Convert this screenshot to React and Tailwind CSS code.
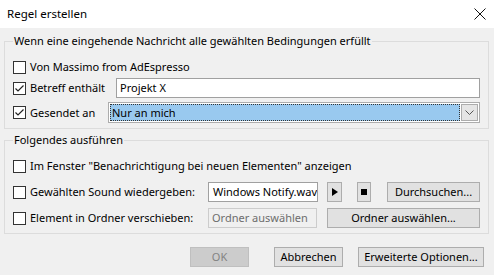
import React from "react";

function Checkbox({ checked }) {
  return (
    <div className="w-[13px] h-[13px] shrink-0 bg-white border border-[#333333] flex items-center justify-center">
      {checked && (
        <svg width="11" height="11" viewBox="0 0 11 11">
          <path d="M1.5 5.5 L4 8 L9.5 2.5" fill="none" stroke="#222" strokeWidth="1.2" />
        </svg>
      )}
    </div>
  );
}

function Btn({ children, className = "", disabled }) {
  return (
    <div
      className={
        "h-[20px] flex items-center justify-center border shrink-0 " +
        (disabled
          ? "bg-[#cccccc] border-[#bfbfbf] text-[#838383] "
          : "bg-[#e1e1e1] border-[#adadad] text-black ") +
        className
      }
    >
      {children}
    </div>
  );
}

export default function App() {
  return (
    <div className="w-[494px] h-[275px] flex flex-col bg-[#f0f0f0] font-['Noto_Sans',sans-serif] text-[11px] leading-[16px] text-black overflow-hidden">
      <div className="h-[28px] bg-white flex items-center justify-between pl-[7px] pr-[8px] shrink-0">
        <span className="text-[11.5px]">Regel erstellen</span>
        <svg width="12" height="12" viewBox="0 0 12 12">
          <path d="M0.5 0.5 L11.5 11.5 M11.5 0.5 L0.5 11.5" stroke="#111" strokeWidth="1" fill="none" />
        </svg>
      </div>
      <div className="flex-1 flex flex-col pl-[4px] pr-[5px] pt-[5px]">
        <fieldset className="border border-[#dcdcdc] pl-[8px] pr-[8px] pt-[8px] pb-[5px]">
          <legend className="px-[1px]">Wenn eine eingehende Nachricht alle gewählten Bedingungen erfüllt</legend>
          <div className="flex items-center h-[20px]">
            <Checkbox />
            <span className="ml-[4px]">Von Massimo from AdEspresso</span>
          </div>
          <div className="flex items-center h-[20px] mt-[1px]">
            <Checkbox checked />
            <span className="ml-[4px] w-[86px] shrink-0">Betreff enthält</span>
            <div className="flex-1 h-[20px] bg-white border border-[#a0a0a0] pl-[3px] flex items-center">Projekt X</div>
          </div>
          <div className="flex items-center h-[21px] mt-[4px]">
            <Checkbox checked />
            <span className="ml-[4px] w-[78px] shrink-0">Gesendet an</span>
            <div className="flex-1 h-[21px] bg-white border border-[#acacac] p-[1px] flex gap-[1px]">
              <div className="flex-1 bg-[#99c9ef] border border-dotted border-[#333] flex items-center pl-[1px]">Nur an mich</div>
              <div className="w-[17px] bg-[#e5e5e5] border border-[#acacac] flex items-center justify-center">
                <svg width="9" height="5" viewBox="0 0 9 5">
                  <path d="M0.5 0.5 L4.5 4.5 L8.5 0.5" stroke="#555" fill="none" strokeWidth="1" />
                </svg>
              </div>
            </div>
          </div>
        </fieldset>
        <fieldset className="border border-[#dcdcdc] pl-[8px] pr-[8px] pt-[8px] pb-[5px] mt-[3px]">
          <legend className="px-[1px]">Folgendes ausführen</legend>
          <div className="flex items-center h-[20px]">
            <Checkbox />
            <span className="ml-[4px]">Im Fenster "Benachrichtigung bei neuen Elementen" anzeigen</span>
          </div>
          <div className="flex items-center h-[20px] mt-[6px]">
            <Checkbox />
            <span className="ml-[4px] w-[178px] shrink-0">Gewählten Sound wiedergeben:</span>
            <div className="w-[110px] shrink-0 h-[20px] bg-white border border-[#a0a0a0] pl-[4px] flex items-center overflow-hidden whitespace-nowrap">Windows Notify.wav</div>
            <Btn className="w-[15px] ml-[9px]">
              <svg width="6" height="8" viewBox="0 0 6 8"><path d="M0 0 L6 4 L0 8 Z" fill="#000" /></svg>
            </Btn>
            <Btn className="w-[14px] ml-[15px]">
              <div className="w-[6px] h-[6px] bg-black" />
            </Btn>
            <Btn className="flex-1 ml-[16px]">Durchsuchen...</Btn>
          </div>
          <div className="flex items-center h-[20px] mt-[6px]">
            <Checkbox />
            <span className="ml-[4px] w-[178px] shrink-0">Element in Ordner verschieben:</span>
            <div className="w-[109px] shrink-0 h-[20px] bg-[#f0f0f0] border border-[#cccccc] text-[#6d6d6d] pl-[3px] flex items-center whitespace-nowrap overflow-hidden">Ordner auswählen</div>
            <Btn className="flex-1 ml-[10px]">Ordner auswählen...</Btn>
          </div>
        </fieldset>
        <div className="flex justify-end mt-[13px] mr-[5px]">
          <Btn disabled className="w-[59px]">OK</Btn>
          <Btn className="w-[69px] ml-[25px]">Abbrechen</Btn>
          <Btn className="w-[126px] ml-[15px]">Erweiterte Optionen...</Btn>
        </div>
      </div>
    </div>
  );
}
